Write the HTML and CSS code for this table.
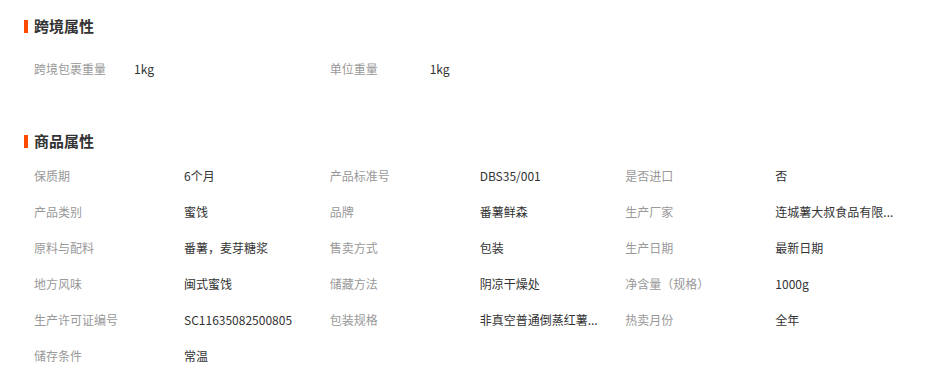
FILE: index.html
```html
<!DOCTYPE html>
<html lang="zh-CN">
<head>
<meta charset="utf-8">
<title>属性</title>
<link rel="stylesheet" href="styles.css">
</head>
<body>
<div class="page">
  <section class="section section-cross">
    <h2 class="title">跨境属性</h2>
    <ul class="attrs attrs-narrow">
      <li class="attr"><span class="label">跨境包裹重量</span><span class="value">1kg</span></li>
      <li class="attr"><span class="label">单位重量</span><span class="value">1kg</span></li>
    </ul>
  </section>
  <section class="section section-goods">
    <h2 class="title">商品属性</h2>
    <ul class="attrs">
      <li class="attr"><span class="label">保质期</span><span class="value">6个月</span></li>
      <li class="attr"><span class="label">产品标准号</span><span class="value">DBS35/001</span></li>
      <li class="attr"><span class="label">是否进口</span><span class="value">否</span></li>
      <li class="attr"><span class="label">产品类别</span><span class="value">蜜饯</span></li>
      <li class="attr"><span class="label">品牌</span><span class="value">番薯鲜森</span></li>
      <li class="attr"><span class="label">生产厂家</span><span class="value">连城薯大叔食品有限...</span></li>
      <li class="attr"><span class="label">原料与配料</span><span class="value">番薯，麦芽糖浆</span></li>
      <li class="attr"><span class="label">售卖方式</span><span class="value">包装</span></li>
      <li class="attr"><span class="label">生产日期</span><span class="value">最新日期</span></li>
      <li class="attr"><span class="label">地方风味</span><span class="value">闽式蜜饯</span></li>
      <li class="attr"><span class="label">储藏方法</span><span class="value">阴凉干燥处</span></li>
      <li class="attr"><span class="label">净含量（规格）</span><span class="value">1000g</span></li>
      <li class="attr"><span class="label">生产许可证编号</span><span class="value">SC11635082500805</span></li>
      <li class="attr"><span class="label">包装规格</span><span class="value">非真空普通倒蒸红薯...</span></li>
      <li class="attr"><span class="label">热卖月份</span><span class="value">全年</span></li>
      <li class="attr"><span class="label">储存条件</span><span class="value">常温</span></li>
    </ul>
  </section>
</div>
</body>
</html>
```
FILE: styles.css
```css
html, body {
  margin: 0;
  padding: 0;
  background: #fff;
}

body {
  font-family: "Noto Sans CJK SC", "Noto Sans", sans-serif;
  font-size: 12px;
  color: #333;
}

.page {
  padding: 16px 4px 0 24px;
}

.section-cross {
  padding-bottom: 44px;
}

.title {
  display: flex;
  align-items: center;
  margin: 0;
  height: 20px;
  line-height: 20px;
  font-size: 15px;
  font-weight: bold;
  color: #333;
}

.title::before {
  content: "";
  width: 4px;
  height: 13px;
  margin-right: 6px;
  background: #ff4a00;
}

.attrs {
  list-style: none;
  margin: 0;
  padding: 7px 0 0 10px;
  display: grid;
  grid-template-columns: repeat(3, 1fr);
}

.attrs-narrow {
  padding-top: 15px;
}

.attr {
  display: flex;
  align-items: center;
  height: 36px;
  line-height: 36px;
  white-space: nowrap;
}

.label {
  flex: 0 0 150px;
  color: #999;
}

.attrs-narrow .label {
  flex-basis: 100px;
}

.value {
  color: #333;
}
```
